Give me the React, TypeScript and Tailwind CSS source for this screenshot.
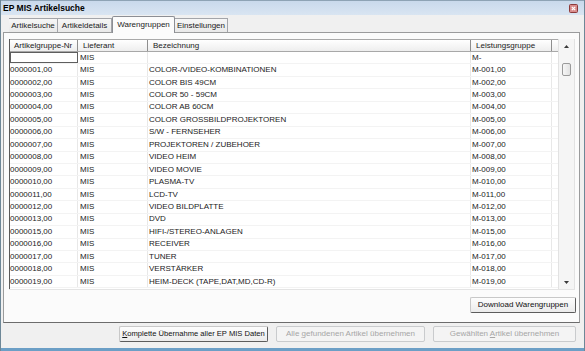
import React from 'react';

const rows = [
  ['0000001,00', 'COLOR-/VIDEO-KOMBINATIONEN', 'M-001,00'],
  ['0000002,00', 'COLOR BIS 49CM', 'M-002,00'],
  ['0000003,00', 'COLOR 50 - 59CM', 'M-003,00'],
  ['0000004,00', 'COLOR AB 60CM', 'M-004,00'],
  ['0000005,00', 'COLOR GROSSBILDPROJEKTOREN', 'M-005,00'],
  ['0000006,00', 'S/W - FERNSEHER', 'M-006,00'],
  ['0000007,00', 'PROJEKTOREN / ZUBEHOER', 'M-007,00'],
  ['0000008,00', 'VIDEO HEIM', 'M-008,00'],
  ['0000009,00', 'VIDEO MOVIE', 'M-009,00'],
  ['0000010,00', 'PLASMA-TV', 'M-010,00'],
  ['0000011,00', 'LCD-TV', 'M-011,00'],
  ['0000012,00', 'VIDEO BILDPLATTE', 'M-012,00'],
  ['0000013,00', 'DVD', 'M-013,00'],
  ['0000015,00', 'HIFI-/STEREO-ANLAGEN', 'M-015,00'],
  ['0000016,00', 'RECEIVER', 'M-016,00'],
  ['0000017,00', 'TUNER', 'M-017,00'],
  ['0000018,00', 'VERSTÄRKER', 'M-018,00'],
  ['0000019,00', 'HEIM-DECK (TAPE,DAT,MD,CD-R)', 'M-019,00'],
];

function CloseBox() {
  return (
    <svg width="9" height="9" viewBox="0 0 9 9">
      <rect x="0.5" y="0.5" width="8" height="8" rx="1" fill="#d98b8b" stroke="#8c3a3a" />
      <path d="M2.8 2.8 L6.2 6.2 M6.2 2.8 L2.8 6.2" stroke="#ffffff" strokeWidth="1.2" />
    </svg>
  );
}

function Tab({ label, width, active }: { label: string; width: string; active?: boolean }) {
  if (active) {
    return (
      <div
        className={`${width} h-[17px] -mb-px relative z-10 flex items-center justify-center bg-[#fbfbfb] border border-b-0 border-[#8c8e94] rounded-t-[2px] pb-[1px] whitespace-nowrap`}
      >
        {label}
      </div>
    );
  }
  return (
    <div
      className={`${width} h-[14px] flex items-center justify-center bg-gradient-to-b from-[#f6f6f6] to-[#e9e9e9] border-t border-r border-[#a3a5aa] whitespace-nowrap`}
    >
      {label}
    </div>
  );
}

function Button({ children, width, disabled }: { children: React.ReactNode; width: string; disabled?: boolean }) {
  return (
    <div
      className={`${width} h-[16px] flex items-center justify-center whitespace-nowrap rounded-[2px] border ${
        disabled
          ? 'border-[#c9cbcd] bg-[#f4f4f4] text-[#a6a6a6]'
          : 'border-t-[#c8c8c8] border-l-[#c8c8c8] border-b-[#5c5c5c] border-r-[#5c5c5c] bg-gradient-to-b from-[#fdfdfd] to-[#ebebeb] text-[#111]'
      }`}
    >
      {children}
    </div>
  );
}

function Arrow({ up }: { up?: boolean }) {
  return (
    <svg width="5" height="3" viewBox="0 0 5 3">
      <path d={up ? 'M0 3 L2.5 0 L5 3 Z' : 'M0 0 L2.5 3 L5 0 Z'} fill="#3a3a3a" />
    </svg>
  );
}

export default function App() {
  return (
    <div className="w-[585px] h-[351px] overflow-hidden flex flex-col bg-[#f0f0f0] border-x border-[#6d8797] font-['Liberation_Sans',Arial,sans-serif] text-[8px] leading-none text-[#1b1b1b]">
      {/* Title bar */}
      <div className="h-[15px] shrink-0 flex items-center justify-between pl-[2px] pr-[6px] bg-gradient-to-b from-[#c9d9ec] to-[#d9e5f2] border-t border-[#8ea3b5]">
        <span className="font-bold text-[8.5px] text-black">EP MIS Artikelsuche</span>
        <CloseBox />
      </div>

      {/* Tabs */}
      <div className="h-[17px] shrink-0 flex items-end pl-[8px]">
        <Tab label="Artikelsuche" width="w-[49px]" />
        <Tab label="Artikeldetails" width="w-[54px]" />
        <Tab label="Warengruppen" width="w-[63px]" active />
        <Tab label="Einstellungen" width="w-[53px]" />
      </div>

      {/* Tab panel */}
      <div className="ml-[2px] w-[577px] h-[291px] shrink-0 bg-[#fbfbfb] border border-[#9a9b9c] border-b-[#6c6c6c] pt-[6px] pl-[5px] flex flex-col">
        <div className="w-[566px] h-[251px] flex bg-white border-b border-[#e4e4e4]">
          <div className="w-[549px] flex flex-col border-l border-[#5a5a5a]">
            {/* Header */}
            <div className="h-[13px] flex bg-gradient-to-b from-[#ffffff] to-[#eeeeee] border-t border-b border-[#a8a8a8] text-[#222]">
              <div className="w-[68px] pl-[4px] flex items-center border-r border-[#8e8e8e]">Artikelgruppe-Nr</div>
              <div className="w-[70px] pl-[5px] flex items-center border-r border-[#8e8e8e]">Lieferant</div>
              <div className="w-[323px] pl-[5px] flex items-center border-r border-[#8e8e8e]">Bezeichnung</div>
              <div className="w-[81px] pl-[5px] flex items-center border-r border-[#8e8e8e]">Leistungsgruppe</div>
              <div className="flex-1" />
            </div>
            {/* Filter row */}
            <div className="h-[12.45px] flex border-b border-[#f3f3f3]">
              <div className="w-[68px] bg-white border border-[#5e5e5e]" />
              <div className="w-[70px] pl-[2px] flex items-center border-r border-[#e8e8e8]">MIS</div>
              <div className="w-[323px] border-r border-[#e8e8e8]" />
              <div className="w-[81px] pl-[1px] flex items-center border-r border-[#e8e8e8]">M-</div>
            </div>
            {rows.map((r) => (
              <div key={r[0]} className="h-[12.45px] flex border-b border-[#f3f3f3]">
                <div className="w-[68px] flex items-center border-r border-[#e8e8e8]">{r[0]}</div>
                <div className="w-[70px] pl-[2px] flex items-center border-r border-[#e8e8e8]">MIS</div>
                <div className="w-[323px] pl-[1px] flex items-center border-r border-[#e8e8e8]">{r[1]}</div>
                <div className="w-[81px] pl-[1px] flex items-center border-r border-[#e8e8e8]">{r[2]}</div>
              </div>
            ))}
          </div>
          {/* Scrollbar */}
          <div className="w-[17px] flex flex-col bg-[#f5f5f5] border-l border-[#e2e2e2] border-r border-[#d8d8d8]">
            <div className="h-[14px] flex items-center justify-center">
              <Arrow up />
            </div>
            <div className="mt-[10px] mx-[3px] h-[13px] rounded-[2px] border border-[#9a9a9a] bg-gradient-to-r from-[#f6f6f6] to-[#e2e2e2]" />
            <div className="flex-1" />
            <div className="h-[14px] flex items-center justify-center">
              <Arrow />
            </div>
          </div>
        </div>
        <div className="mt-[7px] flex justify-end pr-[3px]">
          <Button width="w-[106px]">Download Warengruppen</Button>
        </div>
      </div>

      {/* Bottom buttons */}
      <div className="mt-[3px] flex pl-[118px] gap-[8px]">
        <Button width="w-[149px]">
          <span className="text-[7.6px]">
            <span className="underline">K</span>omplette Übernahme aller EP MIS Daten
          </span>
        </Button>
        <Button width="w-[149px]" disabled>
          <span>
            Alle <span className="underline">g</span>efundenen Artikel übernehmen
          </span>
        </Button>
        <Button width="w-[143px]" disabled>
          <span>
            Gewählten <span className="underline">A</span>rtikel übernehmen
          </span>
        </Button>
      </div>

      <div className="mt-auto h-[3px] bg-[#6c9fc6]" />
    </div>
  );
}
